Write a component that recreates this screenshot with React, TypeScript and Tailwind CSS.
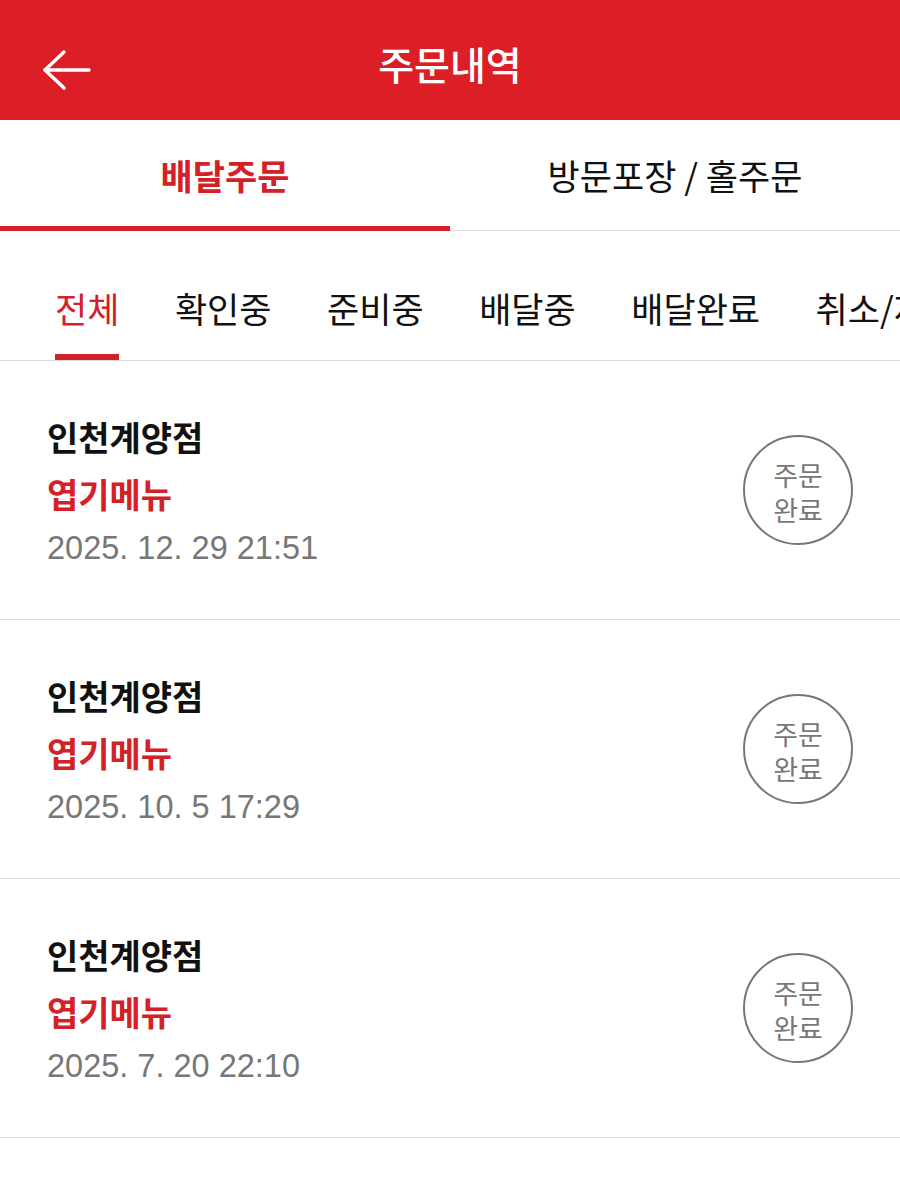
import React from "react";

const KR = { fontFamily: '"Noto Sans CJK KR", "Noto Sans", sans-serif' };
const NUM = { fontFamily: '"Liberation Sans", "Noto Sans CJK KR", sans-serif' };

const orders = [
  { store: "인천계양점", menu: "엽기메뉴", date: "2025. 12. 29 21:51" },
  { store: "인천계양점", menu: "엽기메뉴", date: "2025. 10. 5 17:29" },
  { store: "인천계양점", menu: "엽기메뉴", date: "2025. 7. 20 22:10" },
];

const filters = ["전체", "확인중", "준비중", "배달중", "배달완료", "취소/재주문"];

export default function App() {
  return (
    <div className="w-[900px] min-h-[1178px] bg-white overflow-hidden" style={KR}>
      {/* Header */}
      <div className="relative h-[120px] bg-[#dc1e26] flex items-center justify-center">
        <div className="absolute left-[42px] top-[49px] w-[50px] h-[42px]">
          <svg width="50" height="42" viewBox="0 0 50 42" fill="none">
            <path d="M3 21 H47" stroke="white" strokeWidth="3.5" strokeLinecap="round" />
            <path d="M22 3 L3 21 L22 39" stroke="white" strokeWidth="3.5" strokeLinecap="round" strokeLinejoin="round" />
          </svg>
        </div>
        <div className="text-white text-[39px] leading-[44px] font-medium mt-[6px]">주문내역</div>
      </div>

      {/* Main tabs */}
      <div className="flex h-[111px]">
        <div className="flex-1 flex flex-col">
          <div className="flex-1 flex items-center justify-center pt-[4px]">
            <span className="text-[35px] leading-[40px] font-bold text-[#d42027]">배달주문</span>
          </div>
          <div className="h-[5px] bg-[#d42027]" />
        </div>
        <div className="flex-1 flex flex-col">
          <div className="flex-1 flex items-center justify-center pt-[4px]">
            <span className="text-[35px] leading-[40px] text-[#111]">방문포장 / 홀주문</span>
          </div>
          <div className="h-[4px]" />
          <div className="h-[1px] bg-[#dddddd]" />
        </div>
      </div>

      {/* Filter tabs */}
      <div className="h-[130px] border-b border-[#dddddd] flex items-end pl-[55px] gap-[55.5px] whitespace-nowrap overflow-hidden">
        {filters.map((f, i) => (
          <div key={f} className="flex flex-col shrink-0">
            <span
              className={`text-[35px] leading-[40px] ${i === 0 ? "text-[#d42027]" : "text-[#111]"}`}
            >
              {f}
            </span>
            <div className={`mt-[26px] h-[6px] ${i === 0 ? "bg-[#d42027]" : "bg-transparent"}`} />
          </div>
        ))}
      </div>

      {/* Orders */}
      {orders.map((o, i) => (
        <div
          key={i}
          className="h-[259px] border-b border-[#dddddd] flex items-center justify-between pl-[47px] pr-[47px]"
        >
          <div className="flex flex-col pt-[2px]">
            <div className="text-[34px] leading-[57px] font-bold text-[#111]">{o.store}</div>
            <div className="text-[34px] leading-[57px] font-bold text-[#d42027]">{o.menu}</div>
            <div className="text-[32.5px] leading-[52px] text-[#777777]" style={NUM}>
              {o.date}
            </div>
          </div>
          <div className="w-[110px] h-[110px] rounded-full border-2 border-[#777777] flex items-center justify-center pt-[3px]">
            <span className="text-[27px] leading-[35px] text-[#777777] text-center">
              주문
              <br />
              완료
            </span>
          </div>
        </div>
      ))}
    </div>
  );
}
